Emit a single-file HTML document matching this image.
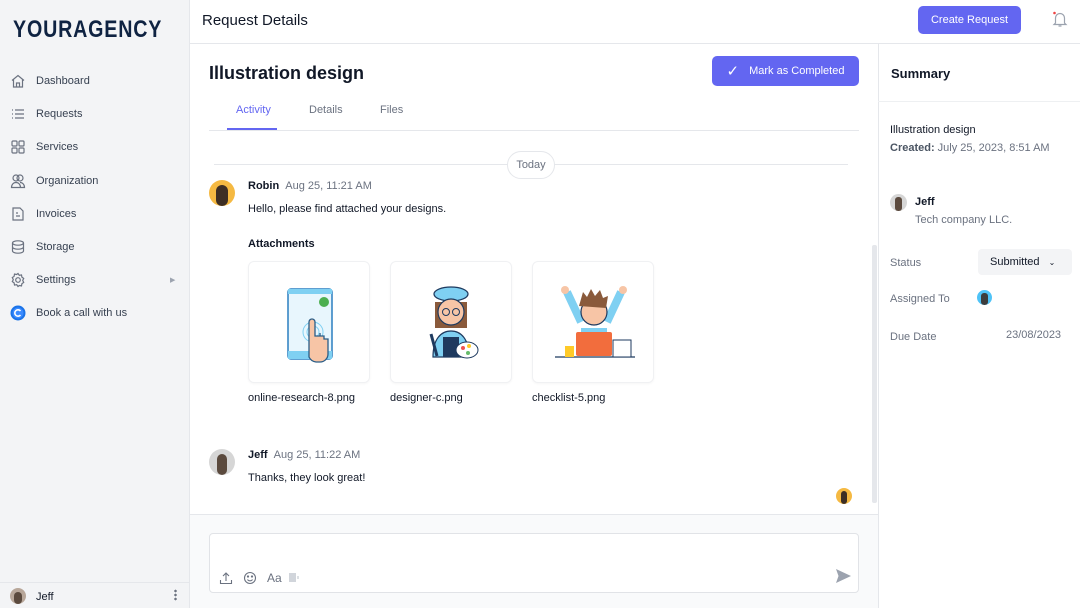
<!DOCTYPE html>
<html><head><meta charset="utf-8"><style>
*{box-sizing:border-box;margin:0;padding:0}
body{width:1080px;height:608px;overflow:hidden;font-family:"Liberation Sans",sans-serif;background:#fff;position:relative;color:#1f2937}
.abs{position:absolute}
.side{left:0;top:0;width:190px;height:608px;background:#f3f4f6;border-right:1px solid #e5e7eb}
.logo{left:13px;top:16px;font-size:24px;font-weight:700;color:#0f2342;letter-spacing:1px;transform:scaleX(.82);transform-origin:left}
.nav{left:10px;font-size:11px;color:#374151;display:flex;align-items:center;gap:10px}
.nav svg{width:16px;height:16px}
.hdr{left:190px;top:0;width:890px;height:44px;border-bottom:1px solid #e5e7eb;background:#fff}
.btn{background:#6366f1;color:#fff;border-radius:5px;font-size:11px;display:flex;align-items:center;justify-content:center}
.av{border-radius:50%;overflow:hidden}
.card{width:122px;height:122px;border:1px solid #f0f1f3;border-radius:6px;background:#fff;box-shadow:0 1px 2px rgba(0,0,0,.04)}
.fn{font-size:11px;color:#111827}
.lbl{font-size:11px;color:#6b7280}
</style></head><body>
<div class="abs side"></div>
<div class="abs logo">YOURAGENCY</div>
<div class="abs nav" style="top:73px"><svg viewBox="0 0 16 16" fill="none" stroke="#6b7280" stroke-width="1.2"><path d="M2 7.5 8 2.5l6 5M3.5 6.5V14h9V6.5M6.5 14v-4h3v4"/></svg><span>Dashboard</span></div>
<div class="abs nav" style="top:106px"><svg viewBox="0 0 16 16" fill="none" stroke="#6b7280" stroke-width="1.2"><path d="M5 4h9M5 8h9M5 12h9M2 4h1M2 8h1M2 12h1"/></svg><span>Requests</span></div>
<div class="abs nav" style="top:139px"><svg viewBox="0 0 16 16" fill="none" stroke="#6b7280" stroke-width="1.2"><rect x="2" y="2" width="5" height="5" rx="1"/><rect x="9" y="2" width="5" height="5" rx="1"/><rect x="2" y="9" width="5" height="5" rx="1"/><rect x="9" y="9" width="5" height="5" rx="1"/></svg><span>Services</span></div>
<div class="abs nav" style="top:173px"><svg viewBox="0 0 16 16" fill="none" stroke="#6b7280" stroke-width="1.2"><circle cx="6" cy="5" r="3"/><circle cx="10" cy="5" r="3"/><path d="M1.5 14.5c0-3 2-5 4.5-5s4.5 2 4.5 5zM10 9.5c2.5 0 4.5 2 4.5 5h-4"/></svg><span>Organization</span></div>
<div class="abs nav" style="top:206px"><svg viewBox="0 0 16 16" fill="none" stroke="#6b7280" stroke-width="1.2"><path d="M3 2h7l3 3v9H3zM6 7h2M6 10h4"/></svg><span>Invoices</span></div>
<div class="abs nav" style="top:239px"><svg viewBox="0 0 16 16" fill="none" stroke="#6b7280" stroke-width="1.2"><ellipse cx="8" cy="4" rx="5.5" ry="2.2"/><path d="M2.5 4v8c0 1.2 2.5 2.2 5.5 2.2s5.5-1 5.5-2.2V4M2.5 8c0 1.2 2.5 2.2 5.5 2.2s5.5-1 5.5-2.2"/></svg><span>Storage</span></div>
<div class="abs nav" style="top:272px"><svg viewBox="0 0 16 16" fill="none" stroke="#6b7280" stroke-width="1.2"><circle cx="8" cy="8" r="2.3"/><path d="M8 1.5l1.3 1.8 2.2-.4.4 2.2 1.8 1.3-1 2 1 2-1.8 1.3-.4 2.2-2.2-.4L8 14.5l-1.3-1.8-2.2.4-.4-2.2L2.3 9.6l1-2-1-2 1.8-1.3.4-2.2 2.2.4z"/></svg><span>Settings</span></div>
<div class="abs" style="left:170px;top:276px;font-size:7px;color:#9ca3af">▶</div>
<div class="abs nav" style="top:305px"><svg viewBox="0 0 16 16"><circle cx="8" cy="8" r="7.5" fill="#1a73e8"/><circle cx="8" cy="8" r="5.5" fill="#3b8bff"/><path d="M10.5 6a3.2 3.2 0 1 0 0 4" fill="none" stroke="#fff" stroke-width="1.6"/></svg><span>Book a call with us</span></div>
<div class="abs" style="left:0;top:582px;width:190px;height:1px;background:#e5e7eb"></div>
<div class="abs av" style="left:10px;top:588px;width:16px;height:16px;background:#b8a79a"><div style="margin:4px 4px;width:8px;height:12px;background:#5b4a3e;border-radius:4px"></div></div>
<div class="abs" style="left:36px;top:591px;font-size:11px;color:#111827">Jeff</div>
<div class="abs" style="left:174px;top:589px;width:3px;height:12px;background:radial-gradient(circle,#6b7280 1.2px,transparent 1.4px) 0 0/3px 4px"></div>

<div class="abs hdr"></div>
<div class="abs" style="left:202px;top:12px;font-size:15px;color:#111827">Request Details</div>
<div class="abs btn" style="left:918px;top:6px;width:103px;height:28px">Create Request</div>
<svg class="abs" style="left:1051px;top:10px" width="18" height="18" viewBox="0 0 18 18" fill="none" stroke="#9ca3af" stroke-width="1.2"><path d="M4.5 13V8a4.5 4.5 0 0 1 9 0v5l1.5 1.5H3zM7.5 16h3"/><circle cx="3.5" cy="3" r="1.3" fill="#ef4444" stroke="none"/></svg>

<div class="abs" style="left:878px;top:44px;width:1px;height:564px;background:#e5e7eb"></div>
<div class="abs" style="left:872px;top:245px;width:5px;height:258px;background:#e5e7eb;border-radius:2px"></div>

<div class="abs" style="left:209px;top:63px;font-size:18px;font-weight:700;color:#111827">Illustration design</div>
<div class="abs btn" style="left:712px;top:56px;width:147px;height:30px;font-size:11px"><span style="font-size:15px;margin-right:10px">✓</span>Mark as Completed</div>
<div class="abs" style="left:236px;top:104px;font-size:11px;color:#6366f1">Activity</div>
<div class="abs" style="left:309px;top:104px;font-size:11px;color:#6b7280">Details</div>
<div class="abs" style="left:380px;top:104px;font-size:11px;color:#6b7280">Files</div>
<div class="abs" style="left:209px;top:130px;width:650px;height:1px;background:#e5e7eb"></div>
<div class="abs" style="left:227px;top:128px;width:50px;height:2px;background:#6366f1"></div>
<div class="abs" style="left:214px;top:164px;width:634px;height:1px;background:#e5e7eb"></div>
<div class="abs" style="left:507px;top:151px;width:48px;height:28px;border:1px solid #e5e7eb;border-radius:14px;background:#fff;font-size:11px;color:#6b7280;text-align:center;line-height:26px">Today</div>

<div class="abs av" style="left:209px;top:180px;width:26px;height:26px;background:#f5b942"><div style="margin:5px 7px;width:12px;height:21px;background:#3d2e24;border-radius:6px"></div></div>
<div class="abs" style="left:248px;top:180px;font-size:11px"><b style="font-weight:600;color:#111827">Robin</b> <span style="color:#6b7280;margin-left:3px">Aug 25, 11:21 AM</span></div>
<div class="abs" style="left:248px;top:203px;font-size:11px;color:#111827">Hello, please find attached your designs.</div>
<div class="abs" style="left:248px;top:238px;font-size:11px;color:#111827;font-weight:600">Attachments</div>

<div class="abs card" style="left:248px;top:261px"><svg width="122" height="122" viewBox="0 0 122 122"><rect x="39" y="27" width="44" height="70" rx="3" fill="#e8f6fd" stroke="#2a7fc0" stroke-width="1.5"/><rect x="39" y="27" width="44" height="5" fill="#7fd0f2"/><rect x="39" y="89" width="44" height="8" fill="#7fd0f2"/><circle cx="75" cy="40" r="5" fill="#4caf50"/><circle cx="64" cy="70" r="10" fill="none" stroke="#7fd0f2"/><circle cx="64" cy="70" r="6" fill="none" stroke="#7fd0f2"/><path d="M60 90V60a3 3 0 0 1 6 0v14h5v-3 3h4v3h4v15a8 8 0 0 1-8 8h-4a9 9 0 0 1-7-5z" fill="#f7c5a6" stroke="#2a5d87" stroke-width="1.3"/></svg></div>
<div class="abs fn" style="left:248px;top:392px">online-research-8.png</div>
<div class="abs card" style="left:390px;top:261px"><svg width="122" height="122" viewBox="0 0 122 122"><ellipse cx="60" cy="32" rx="17" ry="7" fill="#7fd0f2" stroke="#1e3a5f" stroke-width="1.3"/><path d="M44 40h32v26H44z" fill="#8a5a3b"/><circle cx="60" cy="50" r="13" fill="#f7c5a6" stroke="#1e3a5f" stroke-width="1.2"/><circle cx="55" cy="50" r="3.5" fill="none" stroke="#1e3a5f"/><circle cx="65" cy="50" r="3.5" fill="none" stroke="#1e3a5f"/><path d="M42 95c0-18 8-26 18-26s18 8 18 26z" fill="#7fd0f2" stroke="#1e3a5f" stroke-width="1.2"/><rect x="52" y="75" width="16" height="20" fill="#1e3a5f"/><ellipse cx="76" cy="88" rx="11" ry="8" fill="#fff" stroke="#1e3a5f"/><circle cx="72" cy="86" r="2" fill="#ef5350"/><circle cx="78" cy="84" r="2" fill="#ffca28"/><circle cx="77" cy="91" r="2" fill="#66bb6a"/><path d="M40 72l6 22" stroke="#1e3a5f" stroke-width="3"/></svg></div>
<div class="abs fn" style="left:390px;top:392px">designer-c.png</div>
<div class="abs card" style="left:532px;top:261px"><svg width="122" height="122" viewBox="0 0 122 122"><path d="M34 30l14 30M88 30 74 60" stroke="#7fd0f2" stroke-width="8"/><circle cx="32" cy="28" r="4" fill="#f7c5a6"/><circle cx="90" cy="28" r="4" fill="#f7c5a6"/><circle cx="61" cy="50" r="13" fill="#f7c5a6" stroke="#1e3a5f" stroke-width="1.2"/><path d="M46 44l4-14 4 5 4-8 4 7 5-6 3 8 5-2-2 12z" fill="#8a5a3b"/><path d="M48 66h26v8H48z" fill="#7fd0f2"/><rect x="43" y="70" width="36" height="24" rx="2" fill="#f26d3d"/><path d="M22 95h80" stroke="#1e3a5f" stroke-width="1.3"/><rect x="32" y="84" width="9" height="11" fill="#ffca28"/><rect x="80" y="78" width="18" height="17" fill="#fff" stroke="#1e3a5f"/></svg></div>
<div class="abs fn" style="left:532px;top:392px">checklist-5.png</div>

<div class="abs av" style="left:209px;top:449px;width:26px;height:26px;background:#d6d6d6"><div style="margin:5px 8px;width:10px;height:21px;background:#5b4a3e;border-radius:5px"></div></div>
<div class="abs" style="left:248px;top:449px;font-size:11px"><b style="font-weight:600;color:#111827">Jeff</b> <span style="color:#6b7280;margin-left:3px">Aug 25, 11:22 AM</span></div>
<div class="abs" style="left:248px;top:472px;font-size:11px;color:#111827">Thanks, they look great!</div>
<div class="abs av" style="left:836px;top:488px;width:16px;height:16px;background:#f5b942"><div style="margin:3px 5px;width:6px;height:13px;background:#3d2e24;border-radius:3px"></div></div>

<div class="abs" style="left:190px;top:514px;width:688px;height:94px;background:#f9fafb;border-top:1px solid #e5e7eb"></div>
<div class="abs" style="left:209px;top:533px;width:650px;height:60px;background:#fff;border:1px solid #e1e3e7;border-radius:4px"></div>
<svg class="abs" style="left:219px;top:571px" width="90" height="14" viewBox="0 0 90 14" fill="none" stroke="#6b7280" stroke-width="1.1"><path d="M7 10V2M4 5l3-3 3 3M1.5 9v3.5h11V9"/><circle cx="31" cy="7" r="5.5"/><path d="M28.5 8.5a3 3 0 0 0 5 0" /><circle cx="29" cy="5.5" r=".6" fill="#6b7280"/><circle cx="33" cy="5.5" r=".6" fill="#6b7280"/><rect x="70" y="2" width="7" height="9" fill="#d1d5db" stroke="none"/><path d="M79 5v3" stroke="#d1d5db" stroke-width="1.5"/></svg>
<div class="abs" style="left:267px;top:571px;font-size:12px;color:#6b7280">Aa</div>
<svg class="abs" style="left:835px;top:568px" width="17" height="16" viewBox="0 0 17 16"><path d="M1 1l15 7-15 7 2.5-7z" fill="#9ca3af"/></svg>

<div class="abs" style="left:891px;top:66px;font-size:13px;font-weight:700;color:#111827">Summary</div>
<div class="abs" style="left:878px;top:101px;width:202px;height:1px;background:#eef0f2"></div>
<div class="abs" style="left:890px;top:124px;font-size:11px;color:#111827">Illustration design</div>
<div class="abs" style="left:890px;top:142px;font-size:11px;color:#6b7280"><b style="color:#4b5563">Created:</b> July 25, 2023, 8:51 AM</div>
<div class="abs av" style="left:890px;top:194px;width:17px;height:17px;background:#d6d6d6"><div style="margin:3px 5px;width:7px;height:14px;background:#5b4a3e;border-radius:3px"></div></div>
<div class="abs" style="left:915px;top:196px;font-size:11px;font-weight:600;color:#111827">Jeff</div>
<div class="abs" style="left:915px;top:214px;font-size:11px;color:#6b7280">Tech company LLC.</div>
<div class="abs lbl" style="left:890px;top:257px">Status</div>
<div class="abs" style="left:978px;top:249px;width:94px;height:26px;background:#f3f4f6;border-radius:4px;font-size:11px;color:#111827;line-height:26px;padding-left:12px">Submitted <span style="font-size:8px;margin-left:6px">⌄</span></div>
<div class="abs lbl" style="left:890px;top:293px">Assigned To</div>
<div class="abs av" style="left:977px;top:290px;width:15px;height:15px;background:#4fc3f7"><div style="margin:3px 4px;width:7px;height:12px;background:#3d3d3d;border-radius:3px"></div></div>
<div class="abs lbl" style="left:890px;top:331px">Due Date</div>
<div class="abs lbl" style="left:1006px;top:329px">23/08/2023</div>
</body></html>
